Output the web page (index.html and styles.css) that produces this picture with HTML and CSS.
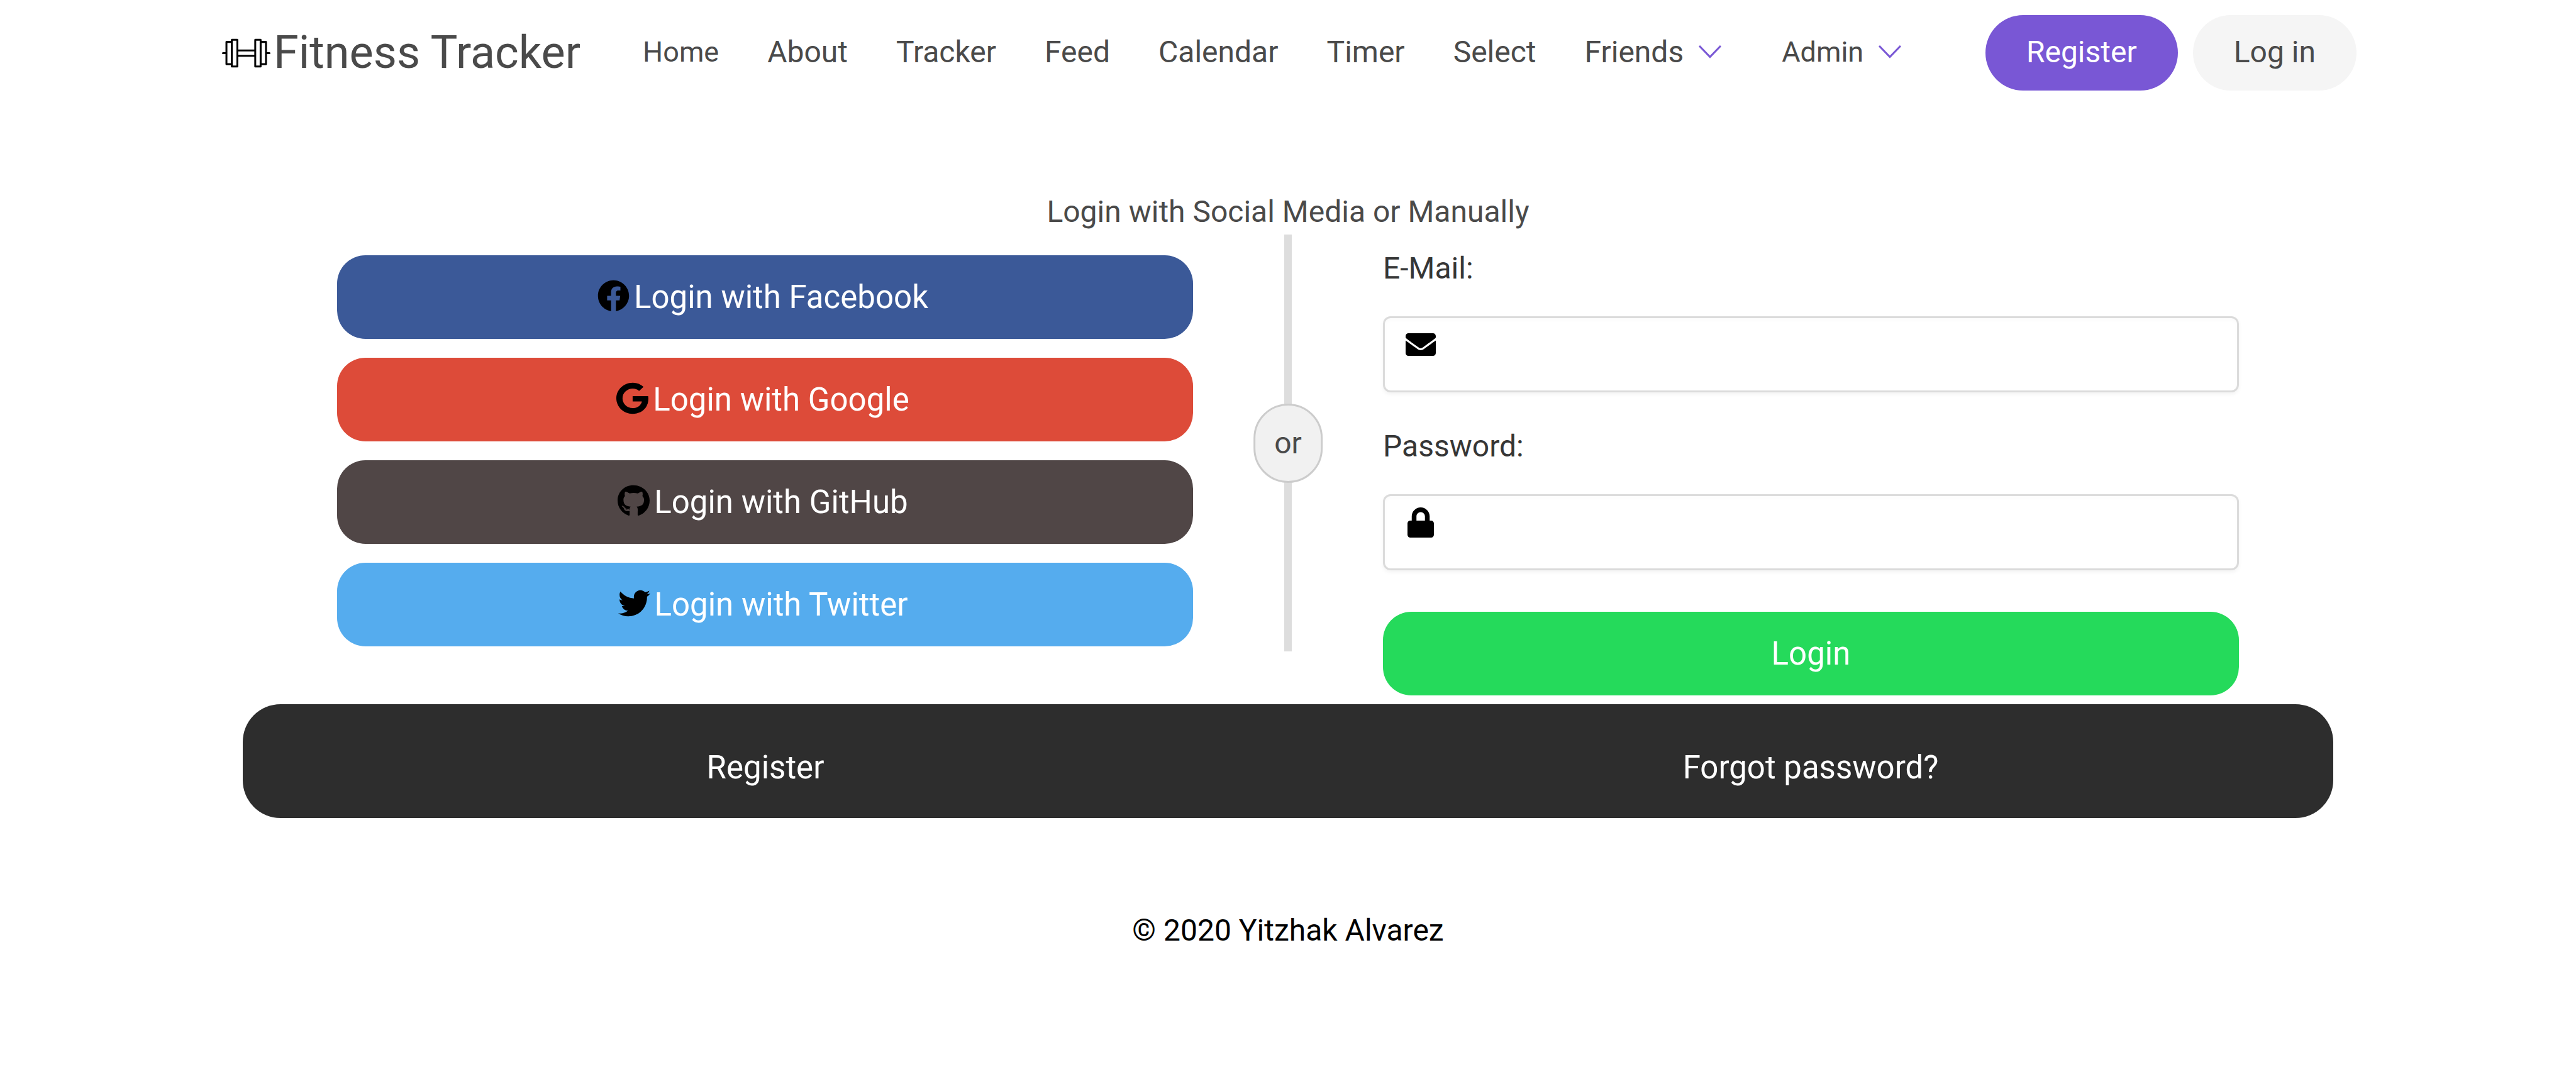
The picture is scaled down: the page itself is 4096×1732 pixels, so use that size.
FILE: index.html
```html
<!DOCTYPE html>
<html lang="en">
<head>
<meta charset="utf-8">
<title>Fitness Tracker</title>
<link rel="stylesheet" href="styles.css">
</head>
<body>
<header class="navbar">
  <a class="brand" href="#">
    <svg class="brand-icon" viewBox="27 27 306 186" aria-hidden="true">
      <g fill="#fff" stroke="#000" stroke-width="12" stroke-linejoin="round" stroke-linecap="round">
        <path d="M33 120H55M306 120H327M124 103H237M124 137H237"/>
        <rect x="55" y="49" width="34" height="141"/>
        <rect x="271" y="49" width="34" height="141"/>
        <rect x="89" y="36" width="35" height="168"/>
        <rect x="237" y="36" width="34" height="168"/>
      </g>
    </svg>
    <span>Fitness Tracker</span>
  </a>
  <nav class="menu">
    <a class="menu-item menu-item-small" href="#">Home</a>
    <a class="menu-item" href="#">About</a>
    <a class="menu-item" href="#">Tracker</a>
    <a class="menu-item" href="#">Feed</a>
    <a class="menu-item" href="#">Calendar</a>
    <a class="menu-item" href="#">Timer</a>
    <a class="menu-item" href="#">Select</a>
    <a class="menu-item menu-drop" href="#">Friends
      <svg class="chevron" viewBox="0 0 36 22" aria-hidden="true"><path d="M1 1L18 18.500L35 1" fill="none" stroke="#7957d5" stroke-width="3"/></svg>
    </a>
    <a class="menu-item menu-item-small menu-drop" href="#">Admin
      <svg class="chevron" viewBox="0 0 36 22" aria-hidden="true"><path d="M1 1L18 18.500L35 1" fill="none" stroke="#7957d5" stroke-width="3"/></svg>
    </a>
  </nav>
  <div class="actions">
    <a class="pill pill-primary" href="#">Register</a>
    <a class="pill pill-light" href="#">Log in</a>
  </div>
</header>

<main class="login">
  <h2 class="login-title">Login with Social Media or Manually</h2>
  <form class="login-columns">
    <div class="divider"><span class="divider-text">or</span></div>
    <div class="social">
      <button type="button" class="btn btn-facebook">
        <svg class="btn-icon" viewBox="0 0 512 512" aria-hidden="true"><path d="M504 256C504 119 393 8 256 8S8 119 8 256c0 123.780 90.690 226.380 209.250 245V327.690h-63V256h63v-54.640c0-62.150 37-96.480 93.670-96.480 27.140 0 55.520 4.840 55.520 4.840v61h-31.280c-30.800 0-40.410 19.120-40.410 38.730V256h68.780l-11 71.690h-57.780V501C413.310 480.380 504 377.780 504 256z"/></svg>
        <span class="btn-label">Login with Facebook</span>
      </button>
      <button type="button" class="btn btn-google">
        <svg class="btn-icon" viewBox="0 0 488 512" preserveAspectRatio="none" aria-hidden="true"><path d="M488 261.800C488 403.300 391.100 504 248 504 110.800 504 0 393.200 0 256S110.800 8 248 8c66.800 0 123 24.500 166.300 64.900l-67.500 64.900C258.500 52.600 94.300 116.600 94.300 256c0 86.500 69.100 156.600 153.700 156.600 98.200 0 135-70.400 140.800-106.900H248v-85.300h236.100c2.300 12.700 3.900 24.900 3.900 41.400z"/></svg>
        <span class="btn-label">Login with Google</span>
      </button>
      <button type="button" class="btn btn-github">
        <svg class="btn-icon" viewBox="0 0 496 512" preserveAspectRatio="none" aria-hidden="true"><path d="M165.900 397.400c0 2-2.300 3.600-5.200 3.600-3.300.3-5.600-1.300-5.600-3.600 0-2 2.300-3.600 5.200-3.600 3-.3 5.600 1.300 5.600 3.600zm-31.100-4.500c-.7 2 1.300 4.300 4.300 4.900 2.600 1 5.600 0 6.200-2s-1.300-4.300-4.300-5.200c-2.600-.7-5.500.3-6.200 2.300zm44.200-1.700c-2.900.7-4.900 2.600-4.600 4.900.3 2 2.900 3.300 5.900 2.600 2.900-.7 4.900-2.600 4.600-4.600-.3-1.900-3-3.200-5.900-2.900zM244.800 8C106.100 8 0 113.300 0 252c0 110.900 69.800 205.800 169.500 239.200 12.800 2.300 17.300-5.600 17.300-12.100 0-6.200-.3-40.400-.3-61.400 0 0-70 15-84.700-29.800 0 0-11.400-29.100-27.800-36.600 0 0-22.900-15.700 1.600-15.400 0 0 24.900 2 38.600 25.800 21.900 38.600 58.600 27.500 72.900 20.900 2.300-16 8.800-27.100 16-33.700-55.900-6.200-112.300-14.300-112.300-110.500 0-27.500 7.600-41.300 23.600-58.900-2.600-6.500-11.100-33.300 2.600-67.900 20.900-6.500 69 27 69 27 20-5.600 41.500-8.500 62.800-8.500s42.800 2.900 62.800 8.500c0 0 48.100-33.600 69-27 13.700 34.700 5.200 61.400 2.600 67.900 16 17.700 25.800 31.500 25.800 58.900 0 96.500-58.900 104.200-114.800 110.500 9.200 7.900 17 22.900 17 46.400 0 33.700-.3 75.400-.3 83.600 0 6.500 4.600 14.400 17.300 12.100C428.200 457.800 496 362.900 496 252 496 113.300 383.500 8 244.800 8zM97.200 352.900c-1.300 1-1 3.300.7 5.200 1.600 1.600 3.900 2.300 5.200 1 1.300-1 1-3.300-.7-5.200-1.600-1.600-3.900-2.300-5.200-1zm-10.800-8.100c-.7 1.300.3 2.900 2.300 3.900 1.600 1 3.600.7 4.300-.7.7-1.300-.3-2.900-2.300-3.900-2-.6-3.600-.3-4.300.7zm32.400 35.600c-1.600 1.300-1 4.300 1.300 6.200 2.300 2.300 5.200 2.600 6.500 1 1.300-1.300.7-4.300-1.300-6.200-2.200-2.300-5.200-2.600-6.500-1zm-11.400-14.700c-1.600 1-1.600 3.600 0 5.900 1.600 2.300 4.300 3.300 5.600 2.300 1.600-1.300 1.600-3.900 0-6.200-1.400-2.300-4-3.300-5.600-2z"/></svg>
        <span class="btn-label">Login with GitHub</span>
      </button>
      <button type="button" class="btn btn-twitter">
        <svg class="btn-icon" viewBox="0 0 512 512" aria-hidden="true"><path d="M459.370 151.716c.325 4.548.325 9.097.325 13.645 0 138.720-105.583 298.558-298.558 298.558-59.452 0-114.680-17.219-161.137-47.106 8.447.974 16.568 1.299 25.340 1.299 49.055 0 94.213-16.568 130.274-44.832-46.132-.975-84.792-31.188-98.112-72.772 6.498.974 12.995 1.624 19.818 1.624 9.421 0 18.843-1.300 27.614-3.573-48.081-9.747-84.143-51.980-84.143-102.985v-1.299c13.969 7.797 30.214 12.670 47.431 13.319-28.264-18.843-46.781-51.005-46.781-87.391 0-19.492 5.197-37.360 14.294-52.954 51.655 63.675 129.300 105.258 216.365 109.807-1.624-7.797-2.599-15.918-2.599-24.040 0-57.828 46.782-104.934 104.934-104.934 30.213 0 57.502 12.670 76.670 33.137 23.715-4.548 46.456-13.320 66.599-25.340-7.798 24.366-24.366 44.833-46.132 57.827 21.117-2.273 41.584-8.122 60.426-16.243-14.292 20.791-32.161 39.308-52.628 54.253z"/></svg>
        <span class="btn-label">Login with Twitter</span>
      </button>
    </div>
    <div class="manual">
      <label class="field-label" for="email">E-Mail:</label>
      <div class="field">
        <input class="input" id="email" type="email">
        <svg class="field-icon" viewBox="0 0 512 512" aria-hidden="true"><path d="M502.300 190.800c3.900-3.100 9.700-.2 9.700 4.700V400c0 26.500-21.500 48-48 48H48c-26.500 0-48-21.500-48-48V195.600c0-5 5.700-7.800 9.700-4.700 22.400 17.400 52.100 39.500 154.100 113.600 21.100 15.400 56.700 47.800 92.200 47.600 35.700.3 72-32.800 92.300-47.600 102-74.100 131.600-96.300 154-113.700zM256 320c23.200.4 56.600-29.200 73.400-41.400 132.700-96.300 142.800-104.700 173.400-128.700 5.800-4.500 9.200-11.500 9.200-18.900v-19c0-26.500-21.500-48-48-48H48c-26.500 0-48 21.500-48 48v19c0 7.400 3.400 14.300 9.200 18.900 30.600 23.900 40.700 32.400 173.400 128.700 16.800 12.200 50.200 41.800 73.400 41.400z"/></svg>
      </div>
      <label class="field-label" for="password">Password:</label>
      <div class="field">
        <input class="input" id="password" type="password">
        <svg class="field-icon" viewBox="0 0 448 512" aria-hidden="true"><path d="M400 224h-24v-72C376 68.200 307.800 0 224 0S72 68.200 72 152v72H48c-26.500 0-48 21.500-48 48v192c0 26.500 21.500 48 48 48h352c26.500 0 48-21.500 48-48V272c0-26.500-21.500-48-48-48zm-104 0H152v-72c0-39.700 32.300-72 72-72s72 32.300 72 72v72z"/></svg>
      </div>
      <button type="submit" class="btn btn-login">Login</button>
    </div>
  </form>
  <div class="bottom-bar">
    <a class="bottom-link" href="#">Register</a>
    <a class="bottom-link" href="#">Forgot password?</a>
  </div>
</main>

<footer class="footer">© 2020 Yitzhak Alvarez</footer>
</body>
</html>
```
FILE: styles.css
```css
* {
  box-sizing: border-box;
}

body {
  margin: 0;
  background: #fff;
  color: #4a4a4a;
  font-family: Roboto, "Liberation Sans", sans-serif;
  font-size: 48px;
  line-height: 72px;
}

a {
  color: inherit;
  text-decoration: none;
}

/* Top bar */
.navbar {
  display: flex;
  align-items: center;
  padding: 24px 349px;
}

.brand {
  display: flex;
  align-items: center;
  gap: 5px;
  padding: 0 36px 0 4px;
  font-size: 72px;
}

.brand-icon {
  width: 77px;
  height: 47px;
}

.menu {
  display: flex;
  align-items: center;
  gap: 5px;
  padding: 0 0 2px 27px;
}

.menu-item {
  padding: 0 36px;
}

.menu-item-small {
  font-size: 45px;
}

.menu-drop {
  display: flex;
  align-items: center;
  gap: 24px;
  padding-right: 55px;
}

.chevron {
  width: 36px;
  height: 22px;
}

.actions {
  display: flex;
  gap: 24px;
  margin-left: auto;
}

.pill {
  padding: 23px 65px 25px;
  border-radius: 60px;
}

.pill-primary {
  background: #7957d5;
  color: #fff;
}

.pill-light {
  background: #f5f5f5;
}

/* Login panel */
.login {
  padding: 133px 386px 0;
}

.login-title {
  margin: 0;
  font-size: 48px;
  font-weight: 400;
  text-align: center;
}

.login-columns {
  position: relative;
  display: grid;
  grid-template-columns: 1fr 1fr;
  gap: 302px;
  padding: 0 150px 14px;
}

.social {
  display: flex;
  flex-direction: column;
  gap: 30px;
  padding-top: 33px;
}

.btn {
  display: block;
  width: 100%;
  padding: 30px;
  border: 0;
  border-radius: 45px;
  color: #fff;
  font-family: inherit;
  font-size: 51px;
  line-height: 73px;
  text-align: center;
}

.social .btn {
  display: flex;
  align-items: center;
  justify-content: center;
}

.btn-facebook {
  background: #3b5998;
}

.btn-google {
  background: #dd4b39;
}

.btn-github {
  background: #504646;
}

.btn-twitter {
  background: #55acee;
}

.btn-icon {
  width: 51px;
  height: 51px;
  margin-bottom: 4px;
}

.btn-label {
  margin: 0 7px;
}

/* Vertical rule with its "or" badge, laid over the gap between columns */
.divider {
  position: absolute;
  top: 0;
  left: 50%;
  width: 12px;
  height: 663px;
  background: #ddd;
  transform: translateX(-50%);
}

.divider-text {
  position: absolute;
  top: 50%;
  left: 50%;
  padding: 24px 30px;
  border: 3px solid #ccc;
  border-radius: 60px;
  background: #f1f1f1;
  transform: translate(-50%, -50%);
}

.manual {
  padding-top: 18px;
}

.field-label {
  display: block;
  margin-bottom: 40px;
  color: #363636;
}

.field {
  position: relative;
  margin-bottom: 50px;
}

.input {
  display: block;
  width: 100%;
  height: 121px;
  padding: 0 30px 0 110px;
  border: 3px solid #dbdbdb;
  border-radius: 12px;
  background: #fff;
  box-shadow: inset 0 3px 6px rgba(10, 10, 10, 0.02), 0 3px 6px rgba(10, 10, 10, 0.05);
  color: #363636;
  font: inherit;
}

.field-icon {
  position: absolute;
  top: 21px;
  left: 36px;
  width: 48px;
  height: 48px;
}

.btn-login {
  margin-top: 66px;
  background: #25da5b;
}

.bottom-bar {
  display: grid;
  grid-template-columns: 1fr 1fr;
  padding: 64px 0 44px;
  border-radius: 60px;
  background: #2d2d2d;
  color: #fff;
  font-size: 51px;
  line-height: 73px;
  text-align: center;
}

.footer {
  padding: 143px 0;
  color: #000;
  text-align: center;
}
```
